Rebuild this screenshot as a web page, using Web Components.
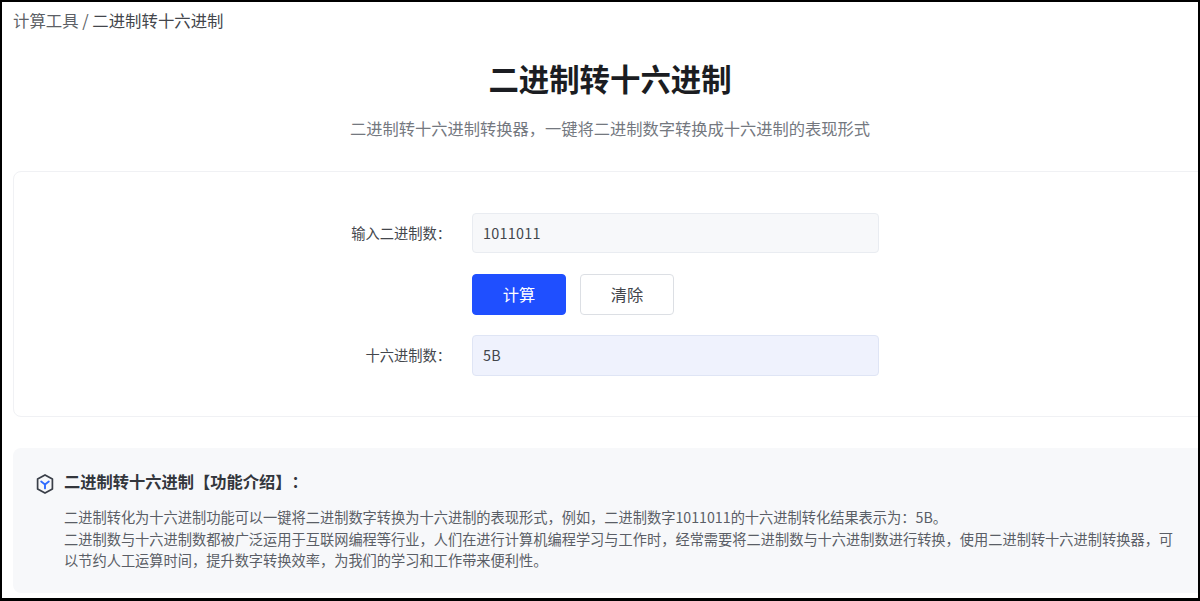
<!DOCTYPE html>
<html lang="zh-CN">
<head>
<meta charset="utf-8">
<title>二进制转十六进制</title>
<style>
  html, body { margin: 0; height: 100%; background: #000; overflow: hidden; }
  body { padding: 2px 2px 3px; box-sizing: border-box; font-family: "Noto Sans CJK SC", "Noto Sans", sans-serif; text-spacing-trim: space-all; }
</style>
</head>
<body>
<calc-page>
  <calc-breadcrumb parent="计算工具" current="二进制转十六进制"></calc-breadcrumb>
  <calc-heading title="二进制转十六进制">二进制转十六进制转换器，一键将二进制数字转换成十六进制的表现形式</calc-heading>
  <calc-card>
    <calc-field label="输入二进制数：">1011011</calc-field>
    <calc-actions>
      <calc-button variant="primary">计算</calc-button>
      <calc-button>清除</calc-button>
    </calc-actions>
    <calc-field label="十六进制数：" variant="result">5B</calc-field>
  </calc-card>
  <calc-intro title="二进制转十六进制【功能介绍】：">
    <p>二进制转化为十六进制功能可以一键将二进制数字转换为十六进制的表现形式，例如，二进制数字1011011的十六进制转化结果表示为：5B。</p>
    <p>二进制数与十六进制数都被广泛运用于互联网编程等行业，人们在进行计算机编程学习与工作时，经常需要将二进制数与十六进制数进行转换，使用二进制转十六进制转换器，可以节约人工运算时间，提升数字转换效率，为我们的学习和工作带来便利性。</p>
  </calc-intro>
</calc-page>

<script>
class CalcPage extends HTMLElement {
  constructor() {
    super();
    this.attachShadow({ mode: 'open' });
    this.shadowRoot.innerHTML = `
      <style>
        :host { display: block; height: 100%; background: #fff; overflow: hidden; }
        .inner { width: 1194px; margin-left: 11px; padding-top: 6px; }
      </style>
      <div class="inner"><slot></slot></div>
    `;
  }
}

class CalcBreadcrumb extends HTMLElement {
  constructor() {
    super();
    this.attachShadow({ mode: 'open' });
    this.shadowRoot.innerHTML = `
      <style>
        :host { display: block; font-size: 16.4px; line-height: 24px; color: #5c5f66; }
        b { font-weight: 400; color: #43464c; }
      </style>
      <span>${this.getAttribute('parent')}</span> / <b>${this.getAttribute('current')}</b>
    `;
  }
}

class CalcHeading extends HTMLElement {
  constructor() {
    super();
    this.attachShadow({ mode: 'open' });
    this.shadowRoot.innerHTML = `
      <style>
        :host { display: block; text-align: center; padding-top: 25px; }
        h1 { margin: 0; font-size: 30.4px; line-height: 42px; font-weight: 700; color: #1b1d22; }
        p { margin: 17px 0 0; font-size: 16.25px; line-height: 24px; color: #74787f; }
      </style>
      <h1>${this.getAttribute('title')}</h1>
      <p><slot></slot></p>
    `;
  }
}

class CalcCard extends HTMLElement {
  constructor() {
    super();
    this.attachShadow({ mode: 'open' });
    this.shadowRoot.innerHTML = `
      <style>
        :host {
          display: flex;
          flex-direction: column;
          gap: 21px;
          margin-top: 31px;
          padding: 41px 0 40px;
          border: 1px solid #f0f1f4;
          border-radius: 8px;
          background: #fff;
        }
      </style>
      <slot></slot>
    `;
  }
}

class CalcField extends HTMLElement {
  constructor() {
    super();
    this.attachShadow({ mode: 'open' });
    const result = this.getAttribute('variant') === 'result';
    this.shadowRoot.innerHTML = `
      <style>
        :host { display: grid; grid-template-columns: 437px 407px; column-gap: 21px; align-items: center; }
        label { text-align: right; font-size: 14.25px; line-height: 22px; padding-bottom: 1px; color: #43464c; }
        .value {
          box-sizing: border-box;
          height: ${result ? 41 : 40}px;
          padding: 0 10px 2px;
          display: flex;
          align-items: center;
          font-size: 14.4px;
          letter-spacing: .25px;
          color: #43464c;
          border-radius: 4px;
          border: 1px solid ${result ? '#dfe5f5' : '#e9ecf1'};
          background: ${result ? '#eff2fd' : '#f7f8fa'};
        }
      </style>
      <label>${this.getAttribute('label')}</label>
      <div class="value"><slot></slot></div>
    `;
  }
}

class CalcActions extends HTMLElement {
  constructor() {
    super();
    this.attachShadow({ mode: 'open' });
    this.shadowRoot.innerHTML = `
      <style>
        :host { display: flex; gap: 14px; padding-left: 458px; margin-bottom: -1px; }
      </style>
      <slot></slot>
    `;
  }
}

class CalcButton extends HTMLElement {
  constructor() {
    super();
    this.attachShadow({ mode: 'open' });
    const primary = this.getAttribute('variant') === 'primary';
    this.shadowRoot.innerHTML = `
      <style>
        :host { display: block; }
        button {
          display: block;
          box-sizing: border-box;
          width: 94px;
          height: 41px;
          padding: 0 0 2px;
          font: inherit;
          font-size: 16.25px;
          border-radius: 4px;
          cursor: pointer;
          color: ${primary ? '#fff' : '#43464c'};
          background: ${primary ? '#1f4fff' : '#fff'};
          border: 1px solid ${primary ? '#1f4fff' : '#dcdfe4'};
        }
      </style>
      <button type="button"><slot></slot></button>
    `;
  }
}

class CalcIntro extends HTMLElement {
  constructor() {
    super();
    this.attachShadow({ mode: 'open' });
    this.shadowRoot.innerHTML = `
      <style>
        :host {
          display: block;
          margin-top: 31px;
          padding: 22px 24px 21px 23px;
          border-radius: 8px;
          background: #f7f8fa;
        }
        .head { display: flex; align-items: flex-start; gap: 10px; }
        svg { display: block; flex: none; margin-top: 4px; }
        h2 { margin: 0; font-size: 16.25px; line-height: 22px; font-weight: 700; color: #33363c; }
        .body { margin: 13px 0 0 28px; width: 1112px; font-size: 14.22px; line-height: 21.5px; color: #5a5e66; }
        ::slotted(p) { margin: 0; }
      </style>
      <div class="head">
        <svg width="18" height="20" viewBox="0 0 18 20" fill="none">
          <path d="M9 .9 16.4 5.1V14.9L9 19.1 1.6 14.9V5.1Z" stroke="#3a3f48" stroke-width="1.7" stroke-linejoin="round"/>
          <path d="M5.2 7.6 9 10.4 12.8 7.6M9 10.4V14.4" stroke="#2f6bff" stroke-width="1.9" stroke-linecap="round" stroke-linejoin="round"/>
        </svg>
        <h2>${this.getAttribute('title')}</h2>
      </div>
      <div class="body"><slot></slot></div>
    `;
  }
}

customElements.define('calc-page', CalcPage);
customElements.define('calc-breadcrumb', CalcBreadcrumb);
customElements.define('calc-heading', CalcHeading);
customElements.define('calc-card', CalcCard);
customElements.define('calc-field', CalcField);
customElements.define('calc-actions', CalcActions);
customElements.define('calc-button', CalcButton);
customElements.define('calc-intro', CalcIntro);
</script>
</body>
</html>
